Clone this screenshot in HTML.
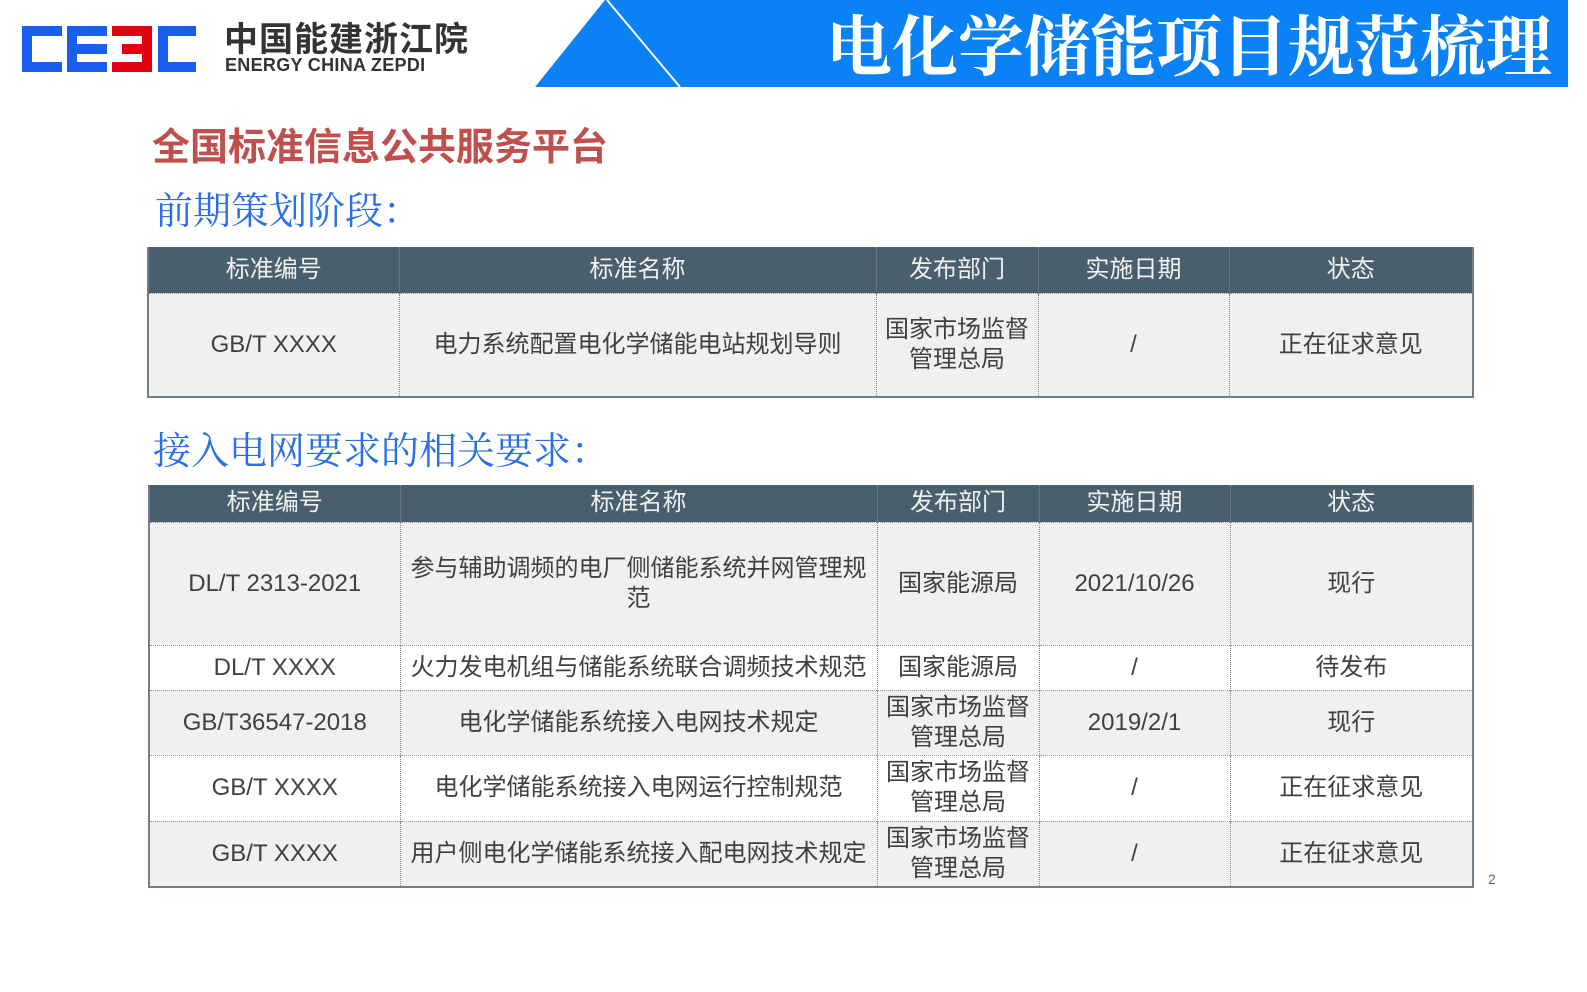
<!DOCTYPE html>
<html><head><meta charset="utf-8"><style>
*{margin:0;padding:0;box-sizing:border-box}
body{width:1587px;height:992px;background:#fff;position:relative;overflow:hidden;font-family:"Liberation Sans","Noto Sans CJK SC",sans-serif}
.abs{position:absolute}
table{position:absolute;border-collapse:collapse;table-layout:fixed;color:#404040;font-size:24px}
td{text-align:center;vertical-align:middle;border-left:1px dotted #8a8a8a;border-top:1px dotted #9a9a9a;line-height:30px;padding:0}
td:first-child{border-left:none}
tr.h td{background:#4a5f6d;color:#f0f0f0;border-top:none}
tr.g td{background:#f0f0f0}
tr.w td{background:#fff}
.tb{border:2px solid #6f7f8a;border-top:none}
</style></head><body>
<svg class="abs" style="left:0;top:0" width="1587" height="90">
<g fill="#1a5ef0">
<path d="M22 26h40v10h-30v26h30v10h-40z"/>
<path d="M67 26h40v10h-30v8h30v10h-30v8h30v10h-40z"/>
<path d="M158 26h38v10h-28v26h28v10h-38z"/>
</g>
<path fill="#e00010" d="M112 26h40v46h-40v-10h30v-8h-20v-10h20v-8h-30z"/>
<polygon points="535,87 605,0 1568,0 1568,87" fill="#0a82f5"/>
<line x1="607" y1="0" x2="680" y2="87" stroke="#fff" stroke-width="2"/>
</svg>
<div class="abs" style="left:224px;top:17px;font-size:34px;line-height:40px;font-weight:bold;color:#333;letter-spacing:1px;font-family:'Noto Sans CJK SC',sans-serif;white-space:nowrap">中国能建浙江院</div>
<div class="abs" style="left:225px;top:55px;font-size:18px;line-height:20px;font-weight:bold;color:#333;letter-spacing:0.3px;white-space:nowrap">ENERGY CHINA ZEPDI</div>
<div class="abs" style="left:826px;top:-6px;font-size:66px;color:#fff;font-family:'Noto Serif CJK SC',serif;font-weight:bold;white-space:nowrap">电化学储能项目规范梳理</div>
<div class="abs" style="left:152px;top:116px;font-size:38px;font-weight:bold;color:#c0504d;font-family:'Noto Sans CJK SC',sans-serif;white-space:nowrap">全国标准信息公共服务平台</div>
<div class="abs" style="left:155px;top:180px;font-size:38px;color:#2a6fe8;font-family:'Noto Serif CJK SC',serif;white-space:nowrap">前期策划阶段：</div>
<div class="abs" style="left:153px;top:420px;font-size:38px;color:#2a6fe8;font-family:'Noto Serif CJK SC',serif;white-space:nowrap">接入电网要求的相关要求：</div>
<table class="tb" style="left:147px;top:247px;width:1327px">
<colgroup><col style="width:251px"><col style="width:477px"><col style="width:162px"><col style="width:191px"><col></colgroup>
<tr class="h" style="height:46px"><td>标准编号</td><td>标准名称</td><td>发布部门</td><td>实施日期</td><td>状态</td></tr>
<tr class="g" style="height:104px"><td>GB/T XXXX</td><td>电力系统配置电化学储能电站规划导则</td><td>国家市场监督<br>管理总局</td><td>/</td><td>正在征求意见</td></tr>
</table>
<table class="tb" style="left:148px;top:485px;width:1326px">
<colgroup><col style="width:251px"><col style="width:477px"><col style="width:162px"><col style="width:191px"><col></colgroup>
<tr class="h" style="height:37px"><td>标准编号</td><td>标准名称</td><td>发布部门</td><td>实施日期</td><td>状态</td></tr>
<tr class="g" style="height:123px"><td>DL/T 2313-2021</td><td>参与辅助调频的电厂侧储能系统并网管理规<br>范</td><td>国家能源局</td><td>2021/10/26</td><td>现行</td></tr>
<tr class="w" style="height:45px"><td>DL/T XXXX</td><td>火力发电机组与储能系统联合调频技术规范</td><td>国家能源局</td><td>/</td><td>待发布</td></tr>
<tr class="g" style="height:65px"><td>GB/T36547-2018</td><td>电化学储能系统接入电网技术规定</td><td>国家市场监督<br>管理总局</td><td>2019/2/1</td><td>现行</td></tr>
<tr class="w" style="height:66px"><td>GB/T XXXX</td><td>电化学储能系统接入电网运行控制规范</td><td>国家市场监督<br>管理总局</td><td>/</td><td>正在征求意见</td></tr>
<tr class="g" style="height:66px"><td>GB/T XXXX</td><td>用户侧电化学储能系统接入配电网技术规定</td><td>国家市场监督<br>管理总局</td><td>/</td><td>正在征求意见</td></tr>
</table>
<div class="abs" style="left:1488px;top:871px;font-size:14px;color:#666">2</div>
</body></html>
